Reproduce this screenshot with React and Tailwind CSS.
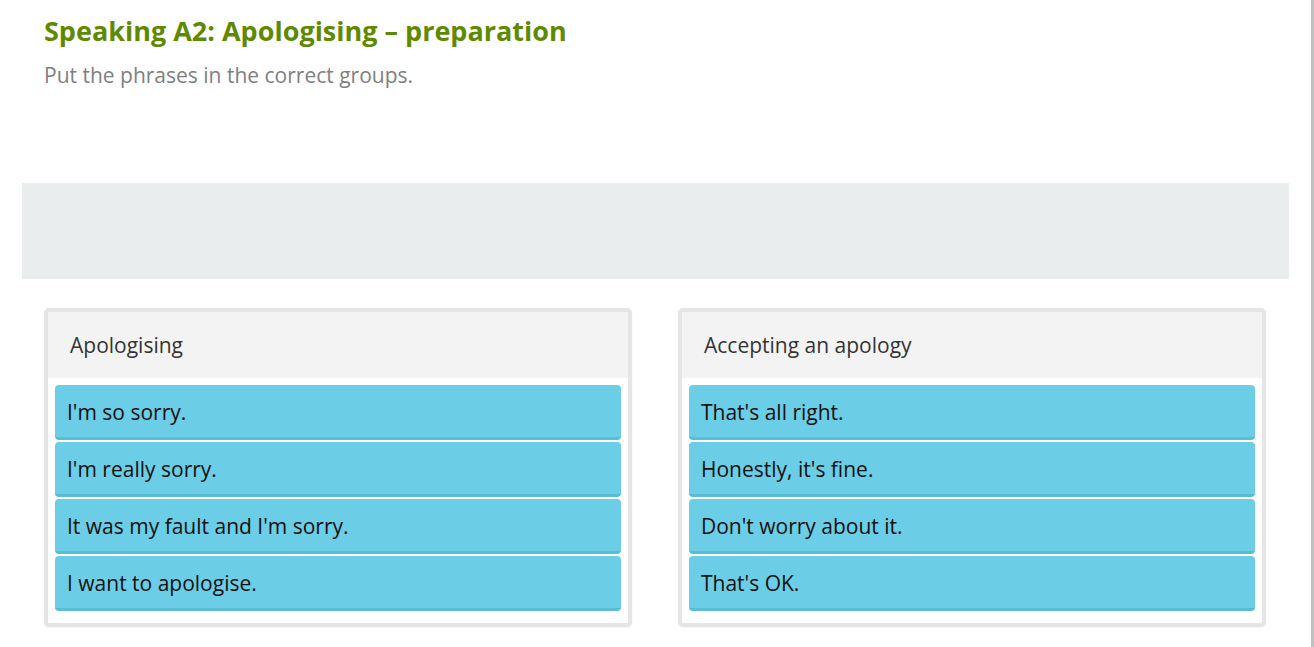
export default function App() {
  const groups = [
    { title: "Apologising", items: ["I'm so sorry.", "I'm really sorry.", "It was my fault and I'm sorry.", "I want to apologise."] },
    { title: "Accepting an apology", items: ["That's all right.", "Honestly, it's fine.", "Don't worry about it.", "That's OK."] },
  ];
  return (
    <div className="relative w-[1314px] h-[647px] bg-white overflow-hidden" style={{ fontFamily: '"Open Sans", sans-serif' }}>
      <div className="absolute right-0 top-0 w-[3px] h-full bg-[#c1c1c1]" />
      <div className="ml-[22px] w-[1267px]">
        <div className="px-[22px] pt-[13px]">
          <h1 className="text-[27px] leading-[36px] font-bold text-[#5f8a00]">Speaking A2: Apologising – preparation</h1>
          <p className="mt-[12px] text-[21px] leading-[28px] text-[#808080]">Put the phrases in the correct groups.</p>
        </div>
        <div className="mt-[94px] h-[96px] bg-[#e9edee]" />
        <div className="px-[22px] pt-[29px] grid grid-cols-[588px_588px] gap-[46px]">
          {groups.map((g) => (
            <div key={g.title} className="border-4 border-[#e5e5e5] rounded-[5px] bg-white pb-[12px] shadow-[0_1px_2px_rgba(0,0,0,0.05)]">
              <div className="h-[66px] bg-[#f3f3f3] flex items-center pl-[22px] pt-[1px] text-[21px] text-[#333333]">{g.title}</div>
              <div className="pt-[7px] pl-[7px] pr-[7px] flex flex-col gap-[2px]">
                {g.items.map((it) => (
                  <div key={it} className="h-[55px] bg-[#6bcde6] border-b-[3px] border-[#5bbcd6] rounded-[4px] flex items-center pl-[12px] pt-[3px] text-[21px] text-[#111111]">
                    {it}
                  </div>
                ))}
              </div>
            </div>
          ))}
        </div>
      </div>
    </div>
  );
}
